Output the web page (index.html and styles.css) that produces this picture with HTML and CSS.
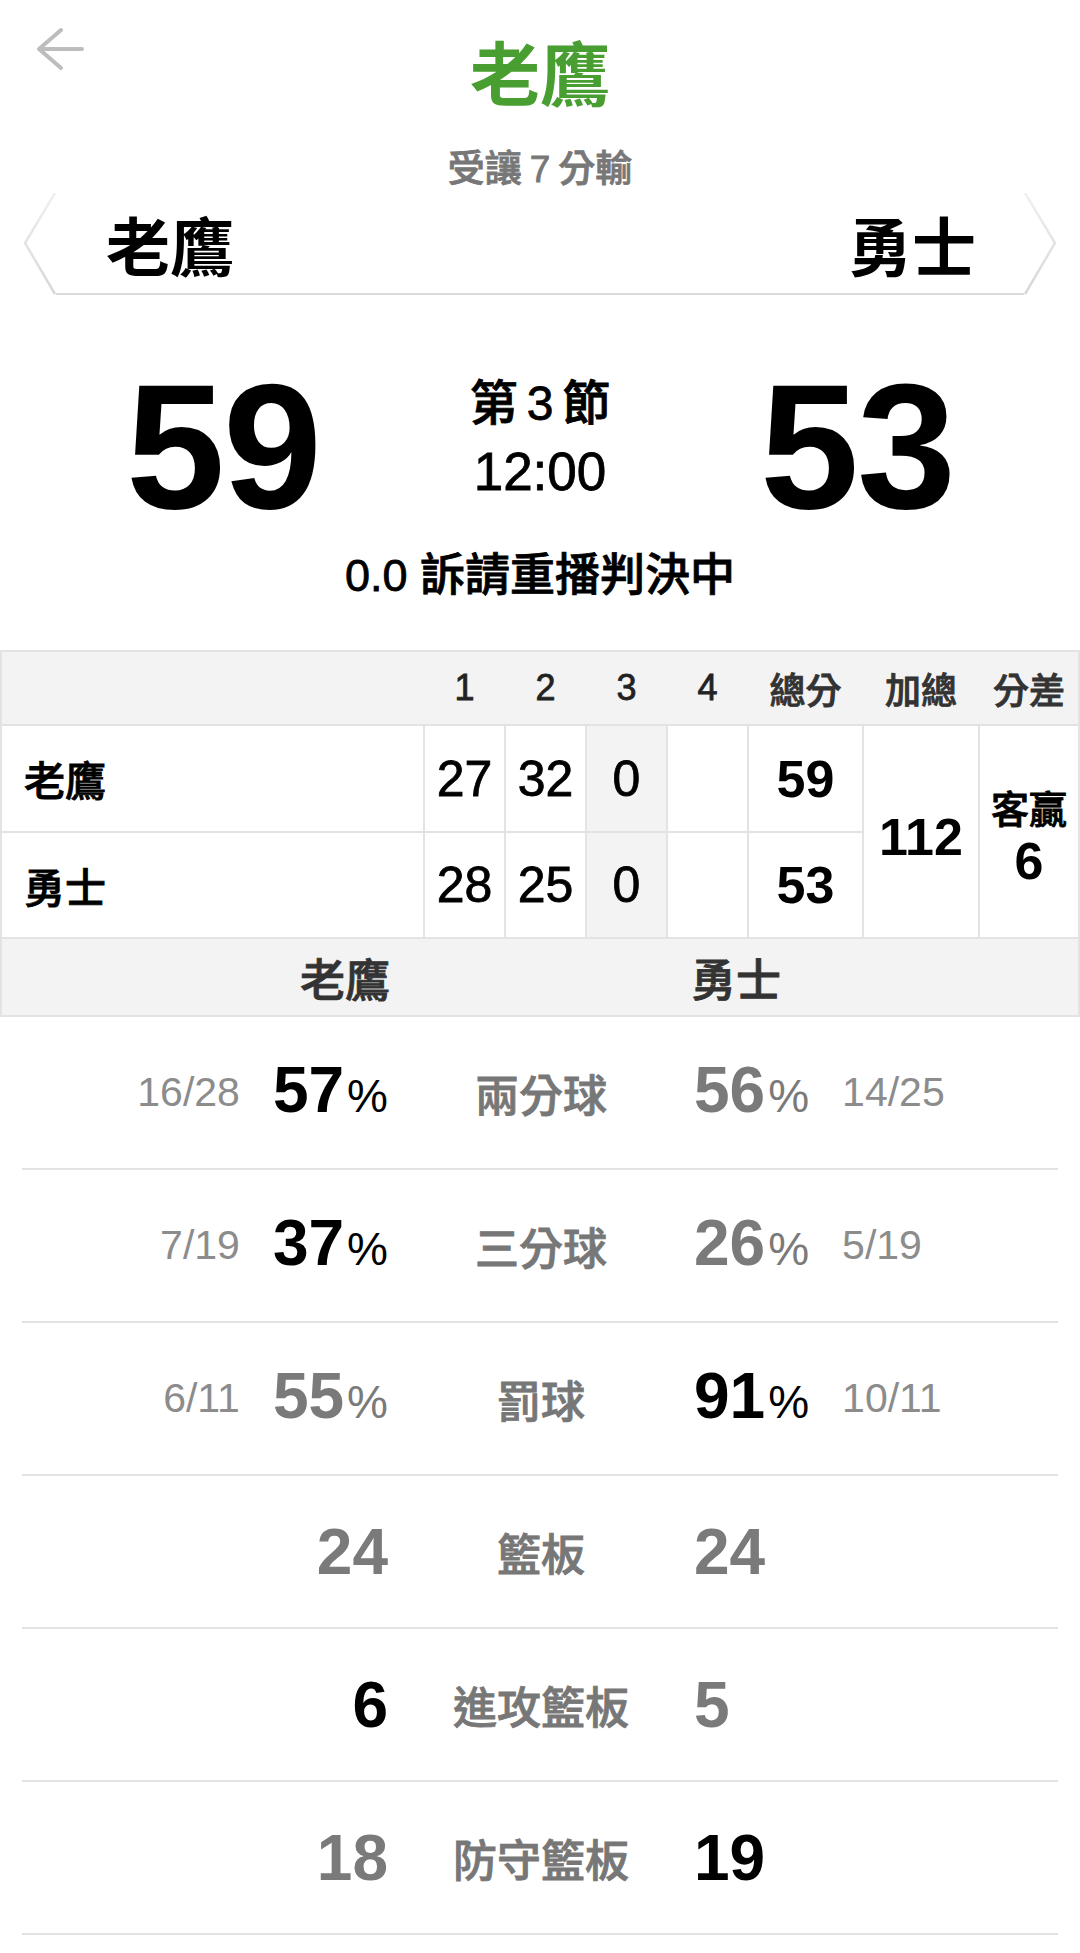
FILE: index.html
```html
<!DOCTYPE html>
<html lang="zh-Hant">
<head>
<meta charset="utf-8">
<title>老鷹</title>
<link rel="stylesheet" href="styles.css">
</head>
<body>
<div class="page">
  <header class="nav">
    <div class="nav-left">
      <svg class="back" width="48" height="44" viewBox="0 0 48 44" aria-label="返回"><path d="M46 22H3M25 3L3 22L25 41" fill="none" stroke="#bdbdbd" stroke-width="4" stroke-linecap="round" stroke-linejoin="round"/></svg>
    </div>
    <h1 class="title">老鷹</h1>
    <div class="nav-right"></div>
  </header>
  <div class="subtitle">受讓<span class="digit">7</span>分輸</div>

  <div class="banner">
    <svg class="edge" width="32" height="102" viewBox="0 0 32 102">
      <defs>
        <linearGradient id="edgeGrad" x1="0" y1="0" x2="0" y2="102" gradientUnits="userSpaceOnUse">
          <stop offset="0" stop-color="#f0f0f0"/>
          <stop offset="1" stop-color="#d6d6d6"/>
        </linearGradient>
      </defs>
      <polyline points="31,0 1,50 31,101" fill="none" stroke="url(#edgeGrad)" stroke-width="2.5"/>
    </svg>
    <div class="banner-mid"><span>老鷹</span><span>勇士</span></div>
    <svg class="edge" width="32" height="102" viewBox="0 0 32 102">
      <polyline points="1,0 31,50 1,101" fill="none" stroke="url(#edgeGrad)" stroke-width="2.5"/>
    </svg>
  </div>

  <section class="score">
    <div class="big">59</div>
    <div class="period">
      <div class="period-name">第<span class="digit">3</span>節</div>
      <div class="clock">12:00</div>
    </div>
    <div class="big">53</div>
  </section>
  <div class="status">0.0 訴請重播判決中</div>

  <div class="box">
    <div class="head">
      <span></span><span class="hn">1</span><span class="hn">2</span><span class="hn">3</span><span class="hn">4</span><span>總分</span><span>加總</span><span>分差</span>
    </div>
    <div class="cell name">老鷹</div>
    <div class="cell qs">27</div>
    <div class="cell qs">32</div>
    <div class="cell qs cur">0</div>
    <div class="cell qs"></div>
    <div class="cell tot">59</div>
    <div class="cell sum">112</div>
    <div class="cell diff"><span>客贏</span><b>6</b></div>
    <div class="cell name">勇士</div>
    <div class="cell qs">28</div>
    <div class="cell qs">25</div>
    <div class="cell qs cur">0</div>
    <div class="cell qs"></div>
    <div class="cell tot">53</div>
    <div class="teams"><span class="tl">老鷹</span><span></span><span class="tr">勇士</span></div>
  </div>

  <section class="stats">
    <div class="row">
      <div class="side l"><span class="frac">16/28</span><span class="val win">57<small>%</small></span></div>
      <div class="label">兩分球</div>
      <div class="side r"><span class="val">56<small>%</small></span><span class="frac">14/25</span></div>
    </div>
    <div class="row">
      <div class="side l"><span class="frac">7/19</span><span class="val win">37<small>%</small></span></div>
      <div class="label">三分球</div>
      <div class="side r"><span class="val">26<small>%</small></span><span class="frac">5/19</span></div>
    </div>
    <div class="row">
      <div class="side l"><span class="frac">6/11</span><span class="val">55<small>%</small></span></div>
      <div class="label">罰球</div>
      <div class="side r"><span class="val win">91<small>%</small></span><span class="frac">10/11</span></div>
    </div>
    <div class="row">
      <div class="side l"><span class="val">24</span></div>
      <div class="label">籃板</div>
      <div class="side r"><span class="val">24</span></div>
    </div>
    <div class="row">
      <div class="side l"><span class="val win">6</span></div>
      <div class="label">進攻籃板</div>
      <div class="side r"><span class="val">5</span></div>
    </div>
    <div class="row">
      <div class="side l"><span class="val">18</span></div>
      <div class="label">防守籃板</div>
      <div class="side r"><span class="val win">19</span></div>
    </div>
  </section>
</div>
</body>
</html>
```

FILE: styles.css
```css
* {
  box-sizing: border-box;
  margin: 0;
  padding: 0;
}

body {
  margin: 0;
  background: #fff;
  color: #000;
  font-family: "Liberation Sans", "Noto Sans CJK TC", sans-serif;
}

.page {
  width: 1080px;
  background: #fff;
}

/* medium-weight look for CJK text */
.subtitle,
.period-name,
.clock,
.status,
.head,
.cell.name,
.cell.qs,
.cell.diff span,
.teams,
.label {
  -webkit-text-stroke: 0.8px currentColor;
}

/* ---------- nav ---------- */
.nav {
  display: grid;
  grid-template-columns: 1fr auto 1fr;
  align-items: start;
}

.back {
  display: block;
  margin: 27px 0 0 36px;
}

.title {
  margin-top: 36px;
  font: 700 70px/70px "Noto Sans CJK TC", sans-serif;
  color: #489e30;
}

.subtitle {
  margin-top: 45px;
  text-align: center;
  font: 500 37px/37px "Liberation Sans", "Noto Sans CJK TC", sans-serif;
  color: #777;
}

.subtitle .digit {
  margin: 0 8px;
}

/* ---------- banner ---------- */
.banner {
  display: flex;
  height: 102px;
  margin: 5px 24px 0;
}

.edge {
  display: block;
  flex: none;
}

.banner-mid {
  flex: 1;
  display: flex;
  justify-content: space-between;
  align-items: center;
  padding: 0 48px 0 50px;
  border-bottom: 2px solid #d9d9d9;
  font: 700 64px/64px "Noto Sans CJK TC", sans-serif;
  color: #000;
}

/* ---------- score ---------- */
.score {
  display: grid;
  grid-template-columns: 446px 1fr 446px;
  align-items: center;
  margin-top: 62px;
  text-align: center;
}

.big {
  font: 700 178px/180px "Liberation Sans", sans-serif;
  letter-spacing: -2px;
}

.period {
  padding-bottom: 16px;
}

.period-name {
  font: 500 48px/48px "Liberation Sans", "Noto Sans CJK TC", sans-serif;
}

.period-name .digit {
  margin: 0 9px;
}

.clock {
  margin-top: 17px;
  font: 400 53px/53px "Liberation Sans", sans-serif;
}

.status {
  margin-top: 16px;
  text-align: center;
  font: 500 45px/45px "Liberation Sans", "Noto Sans CJK TC", sans-serif;
}

/* ---------- box score table ---------- */
.box {
  margin-top: 52px;
  display: grid;
  grid-template-columns: 421px 79px 79px 79px 79px 113px 114px 98px;
  grid-template-rows: 72px 105px 104px 76px;
  gap: 2px;
  padding: 2px;
  background: #e3e3e3;
}

.head {
  grid-column: 1 / -1;
  display: grid;
  grid-template-columns: 421px 79px 79px 79px 79px 113px 114px 98px;
  column-gap: 2px;
  align-items: center;
  background: #f3f3f3;
  text-align: center;
  font: 500 36px/36px "Noto Sans CJK TC", sans-serif;
  color: #333;
}

.head .hn {
  font: 400 36px/36px "Liberation Sans", sans-serif;
  color: #222;
}

.cell {
  background: #fff;
  display: flex;
  align-items: center;
  justify-content: center;
}

.cell.name {
  justify-content: flex-start;
  padding-left: 22px;
  font: 500 41px/41px "Noto Sans CJK TC", sans-serif;
}

.cell.qs {
  font: 400 50px/50px "Liberation Sans", sans-serif;
}

.cell.cur {
  background: #f3f3f3;
}

.cell.tot {
  font: 700 52px/52px "Liberation Sans", sans-serif;
}

.cell.sum {
  grid-row: span 2;
  padding-top: 10px;
  font: 700 52px/52px "Liberation Sans", sans-serif;
}

.cell.diff {
  grid-row: span 2;
  flex-direction: column;
  padding-top: 12px;
  font: 500 38px/38px "Noto Sans CJK TC", sans-serif;
}

.cell.diff b {
  margin-top: 9px;
  font: 700 52px/52px "Liberation Sans", sans-serif;
}

.teams {
  grid-column: 1 / -1;
  display: grid;
  grid-template-columns: 388px 301px 1fr;
  align-items: center;
  background: #f3f3f3;
  font: 500 45px/45px "Noto Sans CJK TC", sans-serif;
  color: #333;
}

.teams .tl {
  text-align: right;
}

.teams .tr {
  text-align: left;
}

/* ---------- stats ---------- */
.stats {
  padding: 0 22px;
}

.row {
  display: grid;
  grid-template-columns: 366px 306px 1fr;
  align-items: center;
  height: 153px;
  border-bottom: 2px solid #e3e3e3;
}

.side {
  display: flex;
  align-items: center;
  gap: 33px;
}

.side.l {
  justify-content: flex-end;
}

.side.r {
  justify-content: flex-start;
}

.label {
  text-align: center;
  font: 500 44px/44px "Noto Sans CJK TC", sans-serif;
  color: #777;
}

.val {
  font: 700 64px/64px "Liberation Sans", sans-serif;
  color: #7a7a7a;
}

.val.win {
  color: #000;
}

.val small {
  margin-left: 3px;
  font-size: 46px;
  font-weight: 400;
}

.frac {
  font: 400 41px/41px "Liberation Sans", sans-serif;
  color: #8c8c8c;
}
```
